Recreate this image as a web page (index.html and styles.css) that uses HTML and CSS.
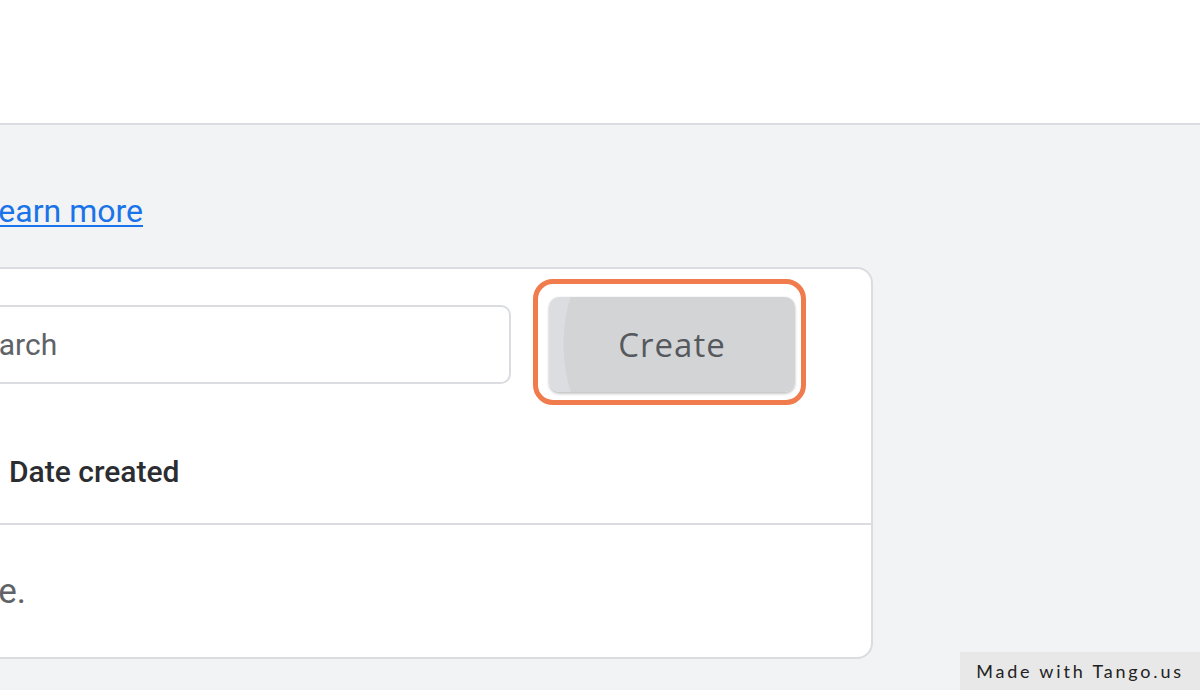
FILE: index.html
```html
<!DOCTYPE html>
<html lang="en">
<head>
<meta charset="utf-8">
<title>Create</title>
<link rel="stylesheet" href="styles.css">
</head>
<body>
  <header class="topbar"></header>
  <main class="content">
    <div class="intro"><p class="intro-text">Manage your items here. <a class="link" href="#">Learn more</a></p></div>
    <section class="card">
      <div class="toolbar">
        <input class="search" type="text" placeholder="Search">
        <div class="highlight">
          <button class="create" type="button">Create</button>
        </div>
      </div>
      <div class="thead">
        <div class="th">Name</div>
        <div class="th">Date created</div>
      </div>
      <div class="tbody">
        <div class="empty"><span class="empty-text">There are no items to display here.</span></div>
      </div>
    </section>
  </main>
  <div class="tango">Made with Tango.us</div>
</body>
</html>
```
FILE: styles.css
```css
html, body {
  margin: 0;
  padding: 0;
}
body {
  width: 1200px;
  height: 690px;
  overflow: hidden;
  background: #f1f3f4;
  font-family: Roboto, "Liberation Sans", Arial, sans-serif;
  position: relative;
}
.topbar {
  height: 123px;
  background: #ffffff;
  border-bottom: 2px solid #dadce0;
}
.content {
  margin-left: -300px;
  width: 1173px;
}
.intro {
  width: 443px;
  margin: 66px 0 35px;
  display: flex;
  justify-content: flex-end;
}
.intro-text {
  margin: 0;
  flex: none;
  white-space: nowrap;
  font-size: 32px;
  line-height: 41px;
  color: #5f6368;
}
.link {
  color: #1a73e8;
  text-decoration: underline;
  text-underline-offset: 3px;
  text-decoration-thickness: 2px;
}
.card {
  background: #ffffff;
  border: 2px solid #dadce0;
  border-radius: 16px;
}
.toolbar {
  display: flex;
  align-items: flex-start;
  gap: 22px;
  padding: 10px 65px 0 198px;
}
.search {
  box-sizing: border-box;
  width: 611px;
  height: 79px;
  margin-top: 26px;
  border: 2px solid #dadce0;
  border-radius: 10px;
  padding: 0 0 0 63px;
  font-family: Roboto, "Liberation Sans", Arial, sans-serif;
  font-size: 30px;
  color: #3c4043;
  background: #ffffff;
  outline: none;
}
.search::placeholder {
  color: #5f6368;
}
.highlight {
  border: 5px solid #f07b4c;
  border-radius: 20px;
  padding: 13px 6px 8px 11px;
  background: #ffffff;
}
.create {
  display: block;
  width: 246px;
  height: 95px;
  border: none;
  border-radius: 10px;
  background: radial-gradient(circle 161px at 175px 47px, #d3d4d6 0 160px, #dcdde0 161px);
  box-shadow: 0 2px 3px rgba(0, 0, 0, 0.22), 0 0 2px rgba(0, 0, 0, 0.1);
  font-family: "Open Sans", Roboto, sans-serif;
  font-size: 33px;
  font-weight: 500;
  letter-spacing: 1px;
  color: #55595e;
  padding: 0;
}
.thead {
  display: grid;
  grid-template-columns: 307px 1fr;
  padding: 50px 0 34px;
  border-bottom: 2px solid #dadce0;
}
.th {
  font-size: 30px;
  line-height: 34px;
  font-weight: 500;
  color: #2b2d30;
}
.tbody {
  height: 132px;
  display: flex;
  align-items: center;
}
.empty {
  width: 324px;
  display: flex;
  justify-content: flex-end;
}
.empty-text {
  flex: none;
  white-space: nowrap;
  font-size: 35px;
  color: #5f6368;
}
.tango {
  position: absolute;
  right: 0;
  bottom: 0;
  width: 240px;
  height: 38px;
  box-sizing: border-box;
  background: #e8e8e8;
  font-family: Lato, "Open Sans", sans-serif;
  font-size: 18px;
  letter-spacing: 2.8px;
  line-height: 38px;
  color: #222222;
  text-align: center;
}
```
